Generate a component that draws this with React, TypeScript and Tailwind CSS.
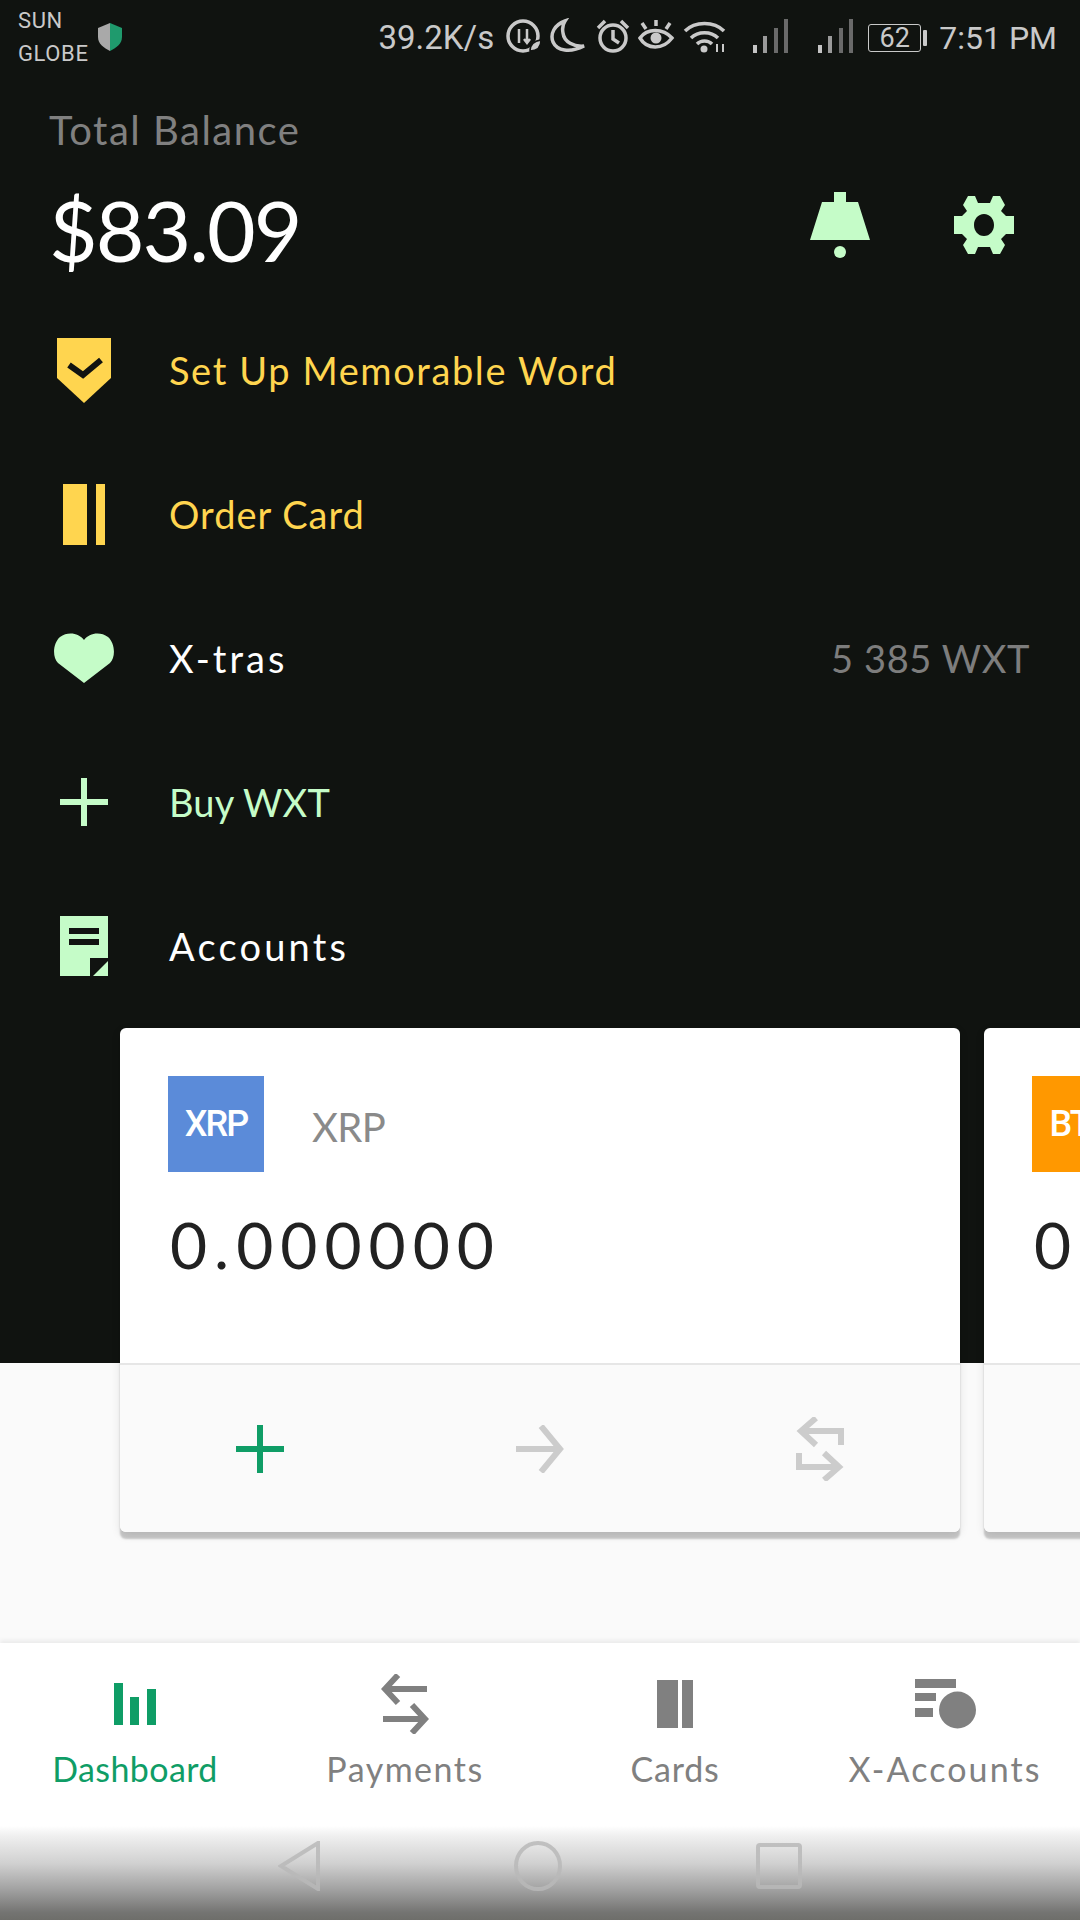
const sans = "font-['Lato',sans-serif]";
const roboto = "font-['Roboto',sans-serif]";

function Bars({ x }: { x: number }) {
  return (
    <g transform={`translate(${x} 0)`}>
      <rect x="0" y="27" width="4" height="8" fill="#c4c4c4" />
      <rect x="10" y="18" width="4" height="17" fill="#9a9a9a" />
      <rect x="21" y="10" width="4" height="25" fill="#6a6a6a" />
      <rect x="31" y="1" width="4" height="34" fill="#6a6a6a" />
    </g>
  );
}

function StatusBar() {
  return (
    <div className={`flex h-[72px] items-start justify-between pl-[18px] pr-[23px] text-[#c9c9c9] ${roboto}`}>
      <div className="flex">
        <div className="flex flex-col pt-[4px] text-[22px] leading-[33px] tracking-[0.6px]">
          <span>SUN</span>
          <span>GLOBE</span>
        </div>
        <svg className="ml-[9px] mt-[23px]" width="26" height="28" viewBox="0 0 26 28">
          <path d="M13 0 L25 5 V14 C25 21 19 25 13 28 Z" fill="#1f9a6d" />
          <path d="M13 0 L1 5 V14 C1 21 7 25 13 28 Z" fill="#a9a9a9" />
        </svg>
      </div>
      <div className="flex items-center pt-[19px]">
        <span className="text-[33px] leading-[38px]">39.2K/s</span>
        <svg className="-mt-[4px] ml-[12px]" width="350" height="36" viewBox="0 0 350 36" fill="none" stroke="#c9c9c9" strokeWidth="3.5">
          <circle cx="17" cy="18" r="15" />
          <path d="M13 11 V25 M21 11 V25 M18 21 L21 25 L24 21" strokeWidth="2.5" />
          <path d="M24 33 C24 26 28 23 35 22 C35 29 31 33 24 33 Z" fill="#c9c9c9" stroke="#111311" strokeWidth="1.5" />
          <path d="M59 3 C48 7 44 16 47 24 C51 33 64 35 78 28 C68 29 58 24 57 15 C56 10 57 6 59 3 Z" />
          <circle cx="107" cy="20" r="13" />
          <path d="M107 12 V21 L113 25 M92 10 L99 3 M122 10 L115 3" />
          <path d="M134 20 C141 10 157 10 166 20 C157 32 141 32 134 20 Z" />
          <circle cx="150" cy="20" r="5.5" fill="#c9c9c9" stroke="none" />
          <path d="M150 2 V8 M136 5 L140 11 M164 5 L160 11" />
          <path d="M179 13 C189 3 208 3 218 13 M185 20 C192 13 205 13 212 20 M191 26 C195 22 202 22 206 26" />
          <circle cx="198" cy="31" r="3.5" fill="#c9c9c9" stroke="none" />
          <path d="M211 26 V34 M217 26 V34" strokeWidth="2" />
          <g stroke="none"><Bars x={247} /><Bars x={312} /></g>
        </svg>
        <div className="ml-[12px] flex h-[28px] w-[53px] items-center justify-center rounded-[3px] border-[1.5px] border-[#c9c9c9] text-[27px] leading-none">62</div>
        <div className="ml-[2px] h-[16px] w-[4px] rounded-[1px] bg-[#c9c9c9]" />
        <span className="ml-[12px] text-[32px] leading-[38px]">7:51 PM</span>
      </div>
    </div>
  );
}

function Header() {
  return (
    <div className="flex items-start justify-between pl-[49px] pr-[66px]">
      <div className={`flex flex-col ${sans}`}>
        <span className="mt-[36px] text-[40px] leading-[44px] tracking-[1.5px] text-[#808080]">Total Balance</span>
        <span className="mt-[28px] text-[84px] leading-[100px] tracking-[-2px] text-white">$83.09</span>
      </div>
      <div className="mt-[120px] flex items-start gap-[84px]">
        <svg width="60" height="66" viewBox="0 0 60 66" fill="#c5fcc8">
          <path d="M24 0 H36 V10 H48 L60 48 H0 L12 10 H24 Z" />
          <ellipse cx="30" cy="60" rx="6" ry="6" />
        </svg>
        <svg className="mt-[4px]" width="60" height="58" viewBox="0 0 60 58" fill="#c5fcc8">
          <path fillRule="evenodd" d="M14 0 H21 L24 7 H36 L39 0 H46 L51 9 L47 15 L52 20 H60 V38 H52 L47 43 L51 49 L46 58 H39 L36 51 H24 L21 58 H14 L9 49 L13 43 L8 38 H0 V20 H8 L13 15 L9 9 Z M30 18 C24 18 20 23 20 29 C20 35 24 40 30 40 C36 40 40 35 40 29 C40 23 36 18 30 18 Z" />
        </svg>
      </div>
    </div>
  );
}

function ShieldIcon() {
  return (
    <svg width="54" height="65" viewBox="0 0 54 65">
      <path d="M0 0 H54 V40 L27 65 L0 40 Z" fill="#ffd54f" />
      <path d="M12 27 L26 37 L44 22" fill="none" stroke="#111311" strokeWidth="6" />
    </svg>
  );
}
function CardIcon({ color = "#ffd54f" }: { color?: string }) {
  return (
    <svg width="42" height="61" viewBox="0 0 42 61" fill={color}>
      <rect x="0" width="24" height="61" />
      <rect x="33" width="9" height="61" />
    </svg>
  );
}
function HeartIcon() {
  return (
    <svg width="60" height="50" viewBox="0 0 60 50" fill="#c5fcc8">
      <path d="M30 50 L4 30 C-2 24 -1 10 6 4 C14 -2 25 0 30 7 C35 0 46 -2 54 4 C61 10 62 24 56 30 Z" />
    </svg>
  );
}
function PlusIcon({ color = "#c5fcc8" }: { color?: string }) {
  return (
    <svg width="48" height="48" viewBox="0 0 48 48" fill={color}>
      <rect x="21" width="6" height="48" />
      <rect y="21" width="48" height="6" />
    </svg>
  );
}
function DocIcon() {
  return (
    <svg width="48" height="60" viewBox="0 0 48 60">
      <path d="M0 0 H48 V42 H30 V60 H0 Z" fill="#c5fcc8" />
      <rect x="9" y="12" width="30" height="6" fill="#111311" />
      <rect x="9" y="23" width="30" height="6" fill="#111311" />
      <path d="M30 42 H48 L30 60 Z" fill="#111311" />
      <path d="M48 45 V60 H33 Z" fill="#c5fcc8" />
    </svg>
  );
}

function Row({ icon, label, color, tracking, right }: { icon: React.ReactNode; label: string; color: string; tracking: string; right?: string }) {
  return (
    <div className={`flex h-[144px] items-center pr-[50px] ${sans}`}>
      <div className="flex w-[169px] justify-center pr-[1px]">{icon}</div>
      <span className={`text-[38px] ${tracking}`} style={{ color }}>{label}</span>
      {right && <span className="ml-auto text-[38px] tracking-[0.6px] text-[#7d7d7d]">{right}</span>}
    </div>
  );
}

function Account({ badge, color, name, amount }: { badge: string; color: string; name: string; amount: string }) {
  return (
    <div className="h-[504px] w-[840px] shrink-0 overflow-hidden rounded-[6px] bg-white shadow-[0_7px_2px_rgba(0,0,0,0.2),0_3px_10px_rgba(0,0,0,0.1)]">
      <div className="h-[335px] px-[48px] pt-[48px]">
        <div className="flex items-center">
          <div className={`flex h-[96px] w-[96px] items-center justify-center text-[36px] font-medium leading-none tracking-[-2px] text-white ${roboto}`} style={{ backgroundColor: color }}>{badge}</div>
          <span className={`ml-[48px] mt-[5px] text-[40px] tracking-[-0.6px] text-[#8a8a8a] ${sans}`}>{name}</span>
        </div>
        <div className={`ml-[2px] mt-[33px] text-[64px] leading-[80px] tracking-[7px] text-[#222] ${sans}`}>{amount}</div>
      </div>
      <div className="flex h-[169px] items-center border-t-[2px] border-[#e6e6e6] bg-[#fafafa]">
        <div className="flex w-[280px] justify-center"><PlusIcon color="#0f9d66" /></div>
        <div className="flex w-[280px] justify-center">
          <svg width="48" height="48" viewBox="0 0 48 48" fill="none" stroke="#cccccc" strokeWidth="6">
            <path d="M0 24 H44 M25 1 L44 24 L25 47" />
          </svg>
        </div>
        <div className="flex w-[280px] justify-center">
          <svg width="48" height="64" viewBox="0 0 48 64" fill="none" stroke="#cccccc" strokeWidth="6">
            <path d="M45 28 V14 H6 M20 1 L5 14 L20 28 M3 36 V50 H42 M28 36 L43 50 L28 63" />
          </svg>
        </div>
      </div>
    </div>
  );
}

function NavItem({ icon, label, tracking, active }: { icon: React.ReactNode; label: string; tracking: string; active?: boolean }) {
  return (
    <div className="flex flex-1 flex-col items-center">
      <div className="flex h-[60px] items-center justify-center">{icon}</div>
      <span className={`mt-[13px] text-[34px] leading-[44px] ${tracking} ${sans} ${active ? "text-[#0f9d66]" : "text-[#808080]"}`}>{label}</span>
    </div>
  );
}

function SystemBar() {
  return (
    <div className="flex h-[94px] items-center justify-center gap-[194px] bg-[linear-gradient(to_bottom,#ffffff_0%,#f0f0f0_10%,#d0d0d0_40%,#a4a4a4_66%,#747472_92%,#6e6e6a_100%)] pb-[14px]">
      <svg width="42" height="50" viewBox="0 0 42 50" fill="none" stroke="#b8b8b8" strokeOpacity="0.85" strokeWidth="4"><path d="M40 2 V48 L3 25 Z" /></svg>
      <svg width="48" height="50" viewBox="0 0 48 50" fill="none" stroke="#b8b8b8" strokeOpacity="0.85" strokeWidth="4"><ellipse cx="24" cy="25" rx="22" ry="23" /></svg>
      <svg width="46" height="46" viewBox="0 0 46 46" fill="none" stroke="#b8b8b8" strokeOpacity="0.85" strokeWidth="4"><rect x="2" y="2" width="42" height="42" rx="2" /></svg>
    </div>
  );
}

export default function App() {
  return (
    <div className="flex h-[1920px] w-[1080px] flex-col overflow-hidden bg-[#fafafa]">
      <div className="h-[1363px] shrink-0 bg-[#101310]">
        <StatusBar />
        <Header />
        <div className="mt-[18px]">
          <Row icon={<ShieldIcon />} label="Set Up Memorable Word" color="#ffd54f" tracking="tracking-[1.6px]" />
          <Row icon={<CardIcon />} label="Order Card" color="#ffd54f" tracking="tracking-[1px]" />
          <Row icon={<HeartIcon />} label="X-tras" color="#ffffff" tracking="tracking-[3px]" right="5 385 WXT" />
          <Row icon={<PlusIcon />} label="Buy WXT" color="#c5fcc8" tracking="tracking-[0.2px]" />
          <Row icon={<DocIcon />} label="Accounts" color="#ffffff" tracking="tracking-[3.2px]" />
        </div>
        <div className="mt-[10px] flex gap-[24px] pl-[120px]">
          <Account badge="XRP" color="#5b8bd9" name="XRP" amount="0.000000" />
          <Account badge="BTC" color="#ff9800" name="BTC" amount="0.000000" />
        </div>
      </div>
      <div className="flex-1" />
      <div className="flex h-[183px] flex-col justify-start bg-white pt-[31px] shadow-[0_-3px_4px_rgba(0,0,0,0.06)]">
        <div className="flex">
          <NavItem active label="Dashboard" tracking="tracking-[0.4px]" icon={
            <svg width="42" height="42" viewBox="0 0 42 42" fill="#0f9d66"><rect width="9" height="42" /><rect x="16" y="14" width="9" height="28" /><rect x="33" y="6" width="9" height="36" /></svg>
          } />
          <NavItem label="Payments" tracking="tracking-[1.5px]" icon={
            <svg width="48" height="60" viewBox="0 0 48 60" fill="none" stroke="#808080" strokeWidth="6"><path d="M46 15 H3 M17 1 L4 15 L17 29 M2 45 H45 M31 31 L44 45 L31 59" /></svg>
          } />
          <NavItem label="Cards" tracking="tracking-[0.8px]" icon={<div className="flex gap-[4px]"><div className="h-[48px] w-[21px] bg-[#808080]" /><div className="h-[48px] w-[11px] bg-[#808080]" /></div>} />
          <NavItem label="X-Accounts" tracking="tracking-[2.1px]" icon={
            <svg width="61" height="50" viewBox="0 0 61 50" fill="#808080"><rect y="0" width="41" height="9" /><rect y="14" width="21" height="8" /><rect y="29" width="18" height="9" /><circle cx="42.5" cy="31" r="18.5" /></svg>
          } />
        </div>
      </div>
      <SystemBar />
    </div>
  );
}
